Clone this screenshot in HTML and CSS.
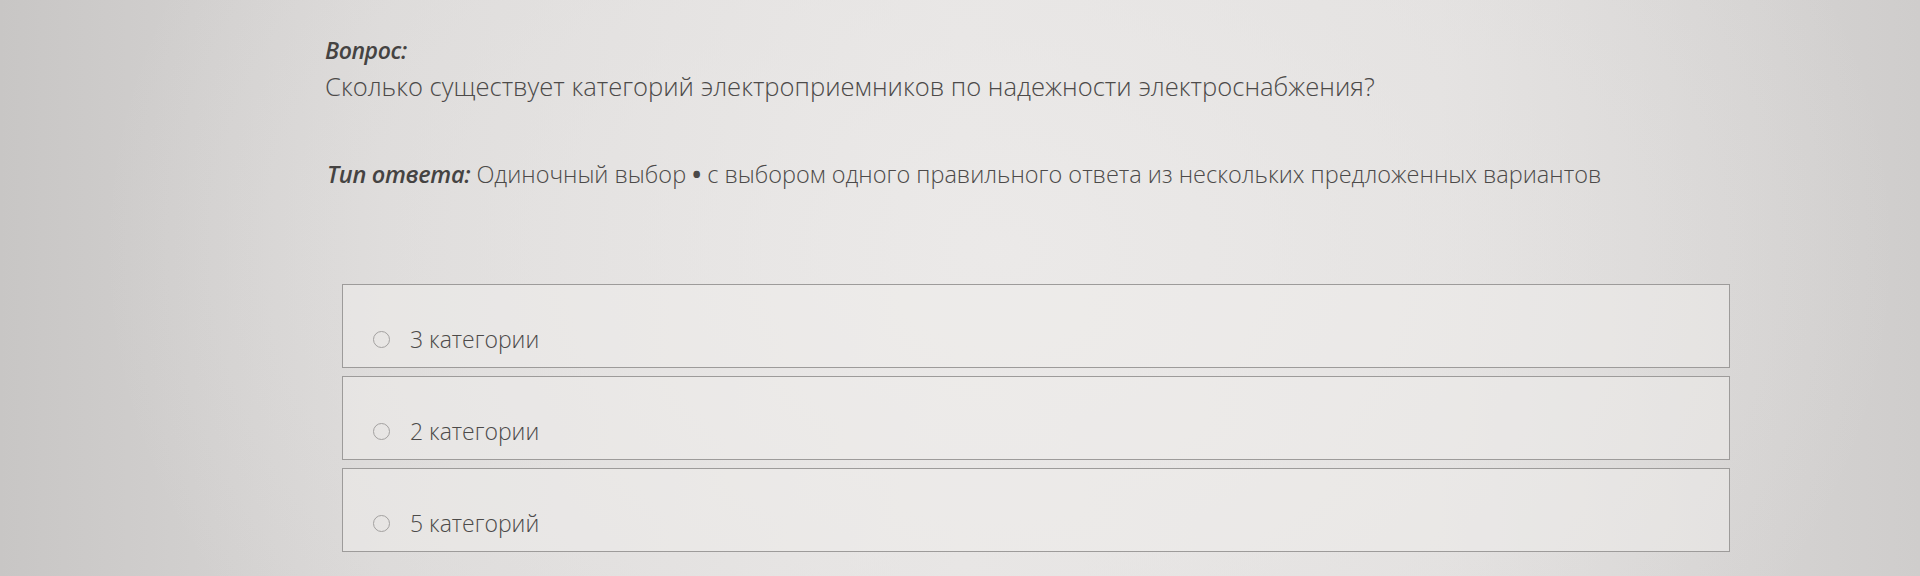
FILE: index.html
```html
<!DOCTYPE html>
<html lang="ru">
<head>
<meta charset="utf-8">
<link rel="stylesheet" href="styles.css">
</head>
<body>
<div class="page">
  <div class="content">
    <div class="label">Вопрос:</div>
    <div class="question">Сколько существует категорий электроприемников по надежности электроснабжения?</div>
    <div class="type"><span class="type-label">Тип ответа:</span> Одиночный выбор <span class="dot">•</span> с выбором одного правильного ответа из нескольких предложенных вариантов</div>
    <div class="options">
      <div class="option"><span class="radio"></span><span class="opt-text">3 категории</span></div>
      <div class="option"><span class="radio"></span><span class="opt-text">2 категории</span></div>
      <div class="option"><span class="radio"></span><span class="opt-text">5 категорий</span></div>
    </div>
  </div>
</div>
</body>
</html>
```
FILE: styles.css
```css
html, body {
  margin: 0;
  padding: 0;
}
body {
  width: 1920px;
  height: 576px;
  overflow: hidden;
  font-family: "Open Sans", "Noto Sans", sans-serif;
  color: #555352;
}
.page {
  width: 1920px;
  height: 576px;
  background:
    radial-gradient(ellipse 900px 700px at 1000px 250px, rgba(236,234,233,0.9), rgba(236,234,233,0) 100%),
    linear-gradient(90deg, #c8c6c5 0%, #dad8d7 20%, #e4e2e1 50%, #e0dedd 75%, #cfcdcc 100%);
  box-sizing: border-box;
  padding: 36px 0 0 325px;
}
.content {
  width: 1405px;
}
.label {
  font-size: 23px;
  font-weight: 600;
  font-style: italic;
  color: #454342;
  line-height: 28px;
  letter-spacing: -0.4px;
}
.question {
  margin-top: 7px;
  font-size: 25.6px;
  font-weight: 300;
  line-height: 32px;
  color: #4c4a49;
}
.type {
  margin-top: 56px;
  font-size: 23.5px;
  font-weight: 300;
  line-height: 30px;
  color: #4c4a49;
  padding-left: 2px;
}
.type-label {
  font-weight: 600;
  font-style: italic;
  color: #454342;
  letter-spacing: -0.3px;
}
.dot {
  font-weight: 700;
}
.options {
  margin-top: 95px;
  margin-left: 17px;
  display: flex;
  flex-direction: column;
  gap: 8px;
}
.option {
  height: 84px;
  box-sizing: border-box;
  border: 1.5px solid #9d9b9a;
  background: rgba(238,236,235,0.55);
  display: flex;
  align-items: center;
  padding: 26px 0 0 30px;
}
.radio {
  width: 15px;
  height: 15px;
  border: 1.8px solid #a3a1a0;
  border-radius: 50%;
  flex: none;
}
.opt-text {
  margin-left: 20px;
  font-size: 23px;
  font-weight: 300;
  color: #4c4a49;
}
```
